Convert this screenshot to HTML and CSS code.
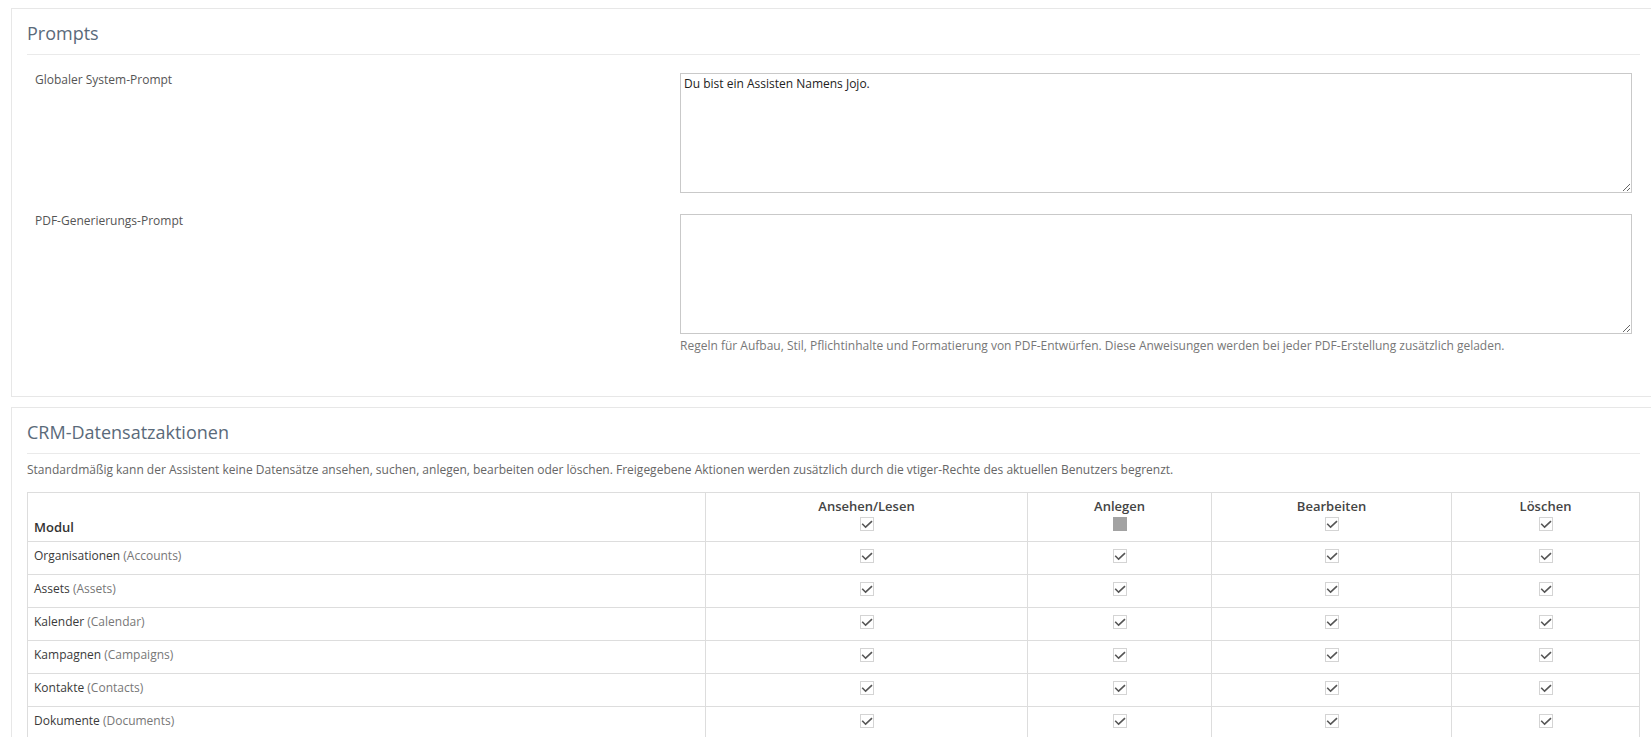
FILE: index.html
```html
<!DOCTYPE html>
<html lang="de">
<head>
<meta charset="utf-8">
<title>Prompts</title>
<link rel="stylesheet" href="styles.css">
</head>
<body>
<div class="page">
  <section class="box">
    <h2 class="box-title">Prompts</h2>
    <div class="form-row">
      <label class="field-label">Globaler System-Prompt</label>
      <div class="field">
        <textarea class="ta">Du bist ein Assisten Namens Jojo.</textarea>
      </div>
    </div>
    <div class="form-row">
      <label class="field-label">PDF-Generierungs-Prompt</label>
      <div class="field">
        <textarea class="ta"></textarea>
        <p class="help">Regeln für Aufbau, Stil, Pflichtinhalte und Formatierung von PDF-Entwürfen. Diese Anweisungen werden bei jeder PDF-Erstellung zusätzlich geladen.</p>
      </div>
    </div>
  </section>

  <section class="box">
    <h2 class="box-title">CRM-Datensatzaktionen</h2>
    <p class="desc">Standardmäßig kann der Assistent keine Datensätze ansehen, suchen, anlegen, bearbeiten oder löschen. Freigegebene Aktionen werden zusätzlich durch die vtiger-Rechte des aktuellen Benutzers begrenzt.</p>
    <table class="perm">
      <colgroup>
        <col class="c-mod"><col class="c-read"><col class="c-create"><col class="c-edit"><col class="c-del">
      </colgroup>
      <thead>
        <tr>
          <th class="th-mod">Modul</th>
          <th>Ansehen/Lesen<svg class="cb" viewBox="0 0 14 14"><rect x="0.5" y="0.5" width="13" height="13" fill="#fff" stroke="#d4d4d4"/><path d="M2.2 6.8 L5.6 10.2 L12 4.2" fill="none" stroke="#555" stroke-width="1.6"/></svg></th>
          <th>Anlegen<span class="cb-ind"></span></th>
          <th>Bearbeiten<svg class="cb" viewBox="0 0 14 14"><rect x="0.5" y="0.5" width="13" height="13" fill="#fff" stroke="#d4d4d4"/><path d="M2.2 6.8 L5.6 10.2 L12 4.2" fill="none" stroke="#555" stroke-width="1.6"/></svg></th>
          <th>Löschen<svg class="cb" viewBox="0 0 14 14"><rect x="0.5" y="0.5" width="13" height="13" fill="#fff" stroke="#d4d4d4"/><path d="M2.2 6.8 L5.6 10.2 L12 4.2" fill="none" stroke="#555" stroke-width="1.6"/></svg></th>
        </tr>
      </thead>
      <tbody id="rows"></tbody>
    </table>
  </section>
</div>
<script src="app.js"></script>
</body>
</html>
```
FILE: app.js
```js
(function () {
  var mods = [
    ["Organisationen", "Accounts"],
    ["Assets", "Assets"],
    ["Kalender", "Calendar"],
    ["Kampagnen", "Campaigns"],
    ["Kontakte", "Contacts"],
    ["Dokumente", "Documents"]
  ];
  var cb = '<svg class="cb" viewBox="0 0 14 14"><rect x="0.5" y="0.5" width="13" height="13" fill="#fff" stroke="#d4d4d4"/><path d="M2.2 6.8 L5.6 10.2 L12 4.2" fill="none" stroke="#555" stroke-width="1.6"/></svg>';
  var html = "";
  mods.forEach(function (m) {
    html += '<tr><td class="td-mod">' + m[0] + ' <span class="en">(' + m[1] + ')</span></td>' +
      '<td>' + cb + '</td><td>' + cb + '</td><td>' + cb + '</td><td>' + cb + '</td></tr>';
  });
  document.getElementById("rows").innerHTML = html;
})();
```
FILE: styles.css
```css
html, body {
  margin: 0;
  padding: 0;
  overflow: hidden;
  background: #fff;
}
body {
  font-family: "Open Sans", "Liberation Sans", sans-serif;
  font-size: 12px;
  color: #333;
}
.page {
  padding: 8px 0 0 11px;
  margin-right: -5px;
}
.box {
  border: 1px solid #e7e7e7;
  padding: 14px 15px 42px;
  margin-bottom: 10px;
  background: #fff;
}
.box-title {
  margin: 0;
  font-size: 18px;
  line-height: 20px;
  font-weight: 400;
  color: #5a6a7a;
  padding-bottom: 11px;
  border-bottom: 1px solid #eaeaea;
}
.form-row {
  display: grid;
  grid-template-columns: 653px 1fr;
  margin-top: 18px;
}
.form-row + .form-row {
  margin-top: 21px;
}
.field-label {
  padding-left: 8px;
  line-height: 14px;
  color: #555;
}
.field {
  padding-right: 8px;
}
.ta {
  display: block;
  box-sizing: border-box;
  width: 100%;
  height: 120px;
  margin: 0;
  border: 1px solid #c9c9c9;
  border-radius: 0;
  padding: 2px 3px;
  font-family: "Open Sans", "Liberation Sans", sans-serif;
  font-size: 12px;
  line-height: 16px;
  color: #222;
  resize: vertical;
  outline: none;
}
.help {
  margin: 4px 0 0;
  line-height: 16px;
  color: #777;
}
.desc {
  margin: 8px 0 14px;
  line-height: 16px;
  color: #666;
}
.perm {
  width: 100%;
  border-collapse: collapse;
  table-layout: fixed;
  border: 1px solid #ddd;
}
.c-mod { width: 678px; }
.c-read { width: 322px; }
.c-create { width: 184px; }
.c-edit { width: 240px; }
.c-del { width: 188px; }
.perm th,
.perm td {
  border: 1px solid #ddd;
  line-height: 18px;
  text-align: center;
  vertical-align: top;
}
.perm th {
  padding: 4px 6px 10px;
  font-size: 13px;
  font-weight: 600;
  color: #444;
}
.perm th.th-mod {
  text-align: left;
  vertical-align: bottom;
  padding-bottom: 5px;
  color: #333;
}
.perm td {
  padding: 5px 6px 9px;
}
.perm td.td-mod {
  text-align: left;
  color: #3a3a3a;
}
.en {
  color: #777;
}
.cb {
  display: block;
  width: 14px;
  height: 14px;
  margin: 2px auto 0;
}
.cb-ind {
  display: block;
  width: 14px;
  height: 14px;
  margin: 2px auto 0;
  background: #a2a2a2;
}
```
